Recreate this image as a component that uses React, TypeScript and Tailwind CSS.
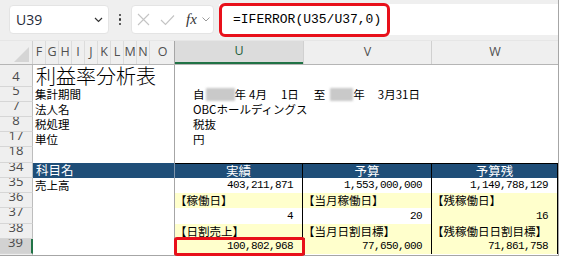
import React from "react";

const jp = "font-['Noto_Sans_CJK_JP',sans-serif]";
const num = "font-['Liberation_Mono',monospace] text-[11px] tracking-[-0.6px] text-black";

const letters: [string, number][] = [
  ["F", 13], ["G", 13], ["H", 13], ["I", 13], ["J", 13],
  ["K", 13], ["L", 13], ["M", 13], ["N", 13], ["O", 25],
];

function RowNum({ n, active, top }: { n: string; active?: boolean; top?: string }) {
  return (
    <div
      className={`w-[33px] shrink-0 overflow-hidden border-b border-[#d6d6d6] flex justify-center text-[13px] leading-[13px] text-[#4a4a4a] font-['Open_Sans',sans-serif] ${
        active ? "bg-[#d2d2d2] border-r-2 border-r-[#217346]" : "bg-[#efefef] border-r border-r-[#bdbdbd]"
      }`}
    >
      <span className={top ?? "-mt-[3px]"}>{n}</span>
    </div>
  );
}

function Blur({ w, className = "" }: { w: number; className?: string }) {
  return (
    <span
      className={`inline-block h-[13px] bg-[#c9c9c9] blur-[1px] rounded-[1px] ${className}`}
      style={{ width: w }}
    />
  );
}

type CellProps = { children?: React.ReactNode; bg?: "y" | "w"; right?: boolean; last?: boolean };

function DataCell({ children, bg = "w", right, last, w }: CellProps & { w: string }) {
  return (
    <div
      className={`${w} shrink-0 flex items-center whitespace-nowrap border-r border-black ${
        bg === "y" ? "bg-[#ffffcc]" : "bg-white"
      } ${right ? "justify-end pr-[9px]" : "pl-[1px]"} ${last ? "" : ""}`}
    >
      {children}
    </div>
  );
}

function Label({ children }: { children: React.ReactNode }) {
  return <span className={`${jp} text-[11.5px] leading-none text-black -ml-[1px]`}>{children}</span>;
}

function Num({ children }: { children: React.ReactNode }) {
  return <span className={`${num} leading-none`}>{children}</span>;
}

function LeftCell({ children, className = "" }: { children?: React.ReactNode; className?: string }) {
  return (
    <div
      className={`w-[142px] shrink-0 flex items-center pl-[3px] border-r border-[#a6a6a6] whitespace-nowrap ${className}`}
    >
      {children}
    </div>
  );
}

export default function App() {
  return (
    <div className="w-[561px] h-[257px] bg-white overflow-hidden">
      <div className="relative w-[559px] h-[256px] border-r border-b border-[#a6a6a6] flex flex-col bg-white">
        {/* formula bar */}
        <div className="h-[40px] shrink-0 bg-[#efefef] flex items-start pt-[4px]">
          <div className="ml-[9px] mt-[1px] w-[100px] h-[29px] rounded-[4px] bg-white border border-[#e4e4e4] flex items-center justify-between pl-[6px] pr-[5px]">
            <span className="font-['Open_Sans',sans-serif] text-[14px] text-[#1f2a3a]">U39</span>
            <svg width="9" height="6" viewBox="0 0 9 6">
              <path d="M1 1 L4.5 4.5 L8 1" fill="none" stroke="#333" strokeWidth="1.2" />
            </svg>
          </div>
          <div className="w-[22px] h-[31px] flex flex-col items-center justify-center gap-[2px]">
            <span className="w-[2.5px] h-[2.5px] rounded-full bg-[#333]" />
            <span className="w-[2.5px] h-[2.5px] rounded-full bg-[#333]" />
            <span className="w-[2.5px] h-[2.5px] rounded-full bg-[#333]" />
          </div>
          <div className="mt-[1px] w-[83px] h-[29px] rounded-[4px] bg-white border border-[#e4e4e4] flex items-center pl-[5px]">
            <svg width="13" height="13" viewBox="0 0 13 13">
              <path d="M1 1 L12 12 M12 1 L1 12" stroke="#c4c4c4" strokeWidth="1.1" />
            </svg>
            <svg width="15" height="12" viewBox="0 0 15 12" className="ml-[10px]">
              <path d="M1 6 L5.5 10.5 L14 1.5" fill="none" stroke="#c4c4c4" strokeWidth="1.1" />
            </svg>
            <span className="ml-[11px] font-['Liberation_Serif',serif] italic text-[15px] leading-none text-[#333]">
              fx
            </span>
            <svg width="8" height="5" viewBox="0 0 8 5" className="ml-[5px]">
              <path d="M0.5 0.5 L4 4 L7.5 0.5" fill="none" stroke="#999" strokeWidth="1" />
            </svg>
          </div>
          <div className="ml-[5px] w-[339px] h-[31px] bg-white flex items-center pl-[14px]">
            <span className="font-['Liberation_Mono',monospace] text-[13px] text-black">=IFERROR(U35/U37,0)</span>
          </div>
        </div>

        {/* column headers */}
        <div className="h-[25px] shrink-0 flex bg-[#efefef] border-t border-[#e6e6e6] border-b border-b-[#b5b5b5] font-['Open_Sans',sans-serif] text-[12.5px] text-[#505050]">
          <div className="w-[33px] shrink-0 flex items-end justify-end pr-[3px] pb-[2px] border-r border-[#d0d0d0]">
            <svg width="15" height="15" viewBox="0 0 15 15">
              <path d="M15 0 L15 15 L0 15 Z" fill="#d5d5d5" />
            </svg>
          </div>
          <div className="w-[142px] shrink-0 flex border-r border-[#a6a6a6]">
            {letters.map(([l, w], i) => (
              <div
                key={l}
                className={`shrink-0 flex items-center justify-center ${i < letters.length - 1 ? "border-r border-[#dcdcdc]" : ""}`}
                style={{ width: w }}
              >
                {l}
              </div>
            ))}
          </div>
          <div className="w-[128px] shrink-0 flex items-center justify-center bg-[#dcdcdc] border-b-2 border-[#217346] text-[#1d5c3a]">
            U
          </div>
          <div className="w-[129px] shrink-0 flex items-center justify-center border-l border-r border-[#d0d0d0]">V</div>
          <div className="w-[126px] shrink-0 flex items-center justify-center">W</div>
        </div>

        {/* row 4 */}
        <div className="h-[22px] shrink-0 flex">
          <RowNum n="4" top="mt-[5px]" />
          <LeftCell>
            <span className={`${jp} font-light text-[20px] leading-none text-black`}>利益率分析表</span>
          </LeftCell>
        </div>

        {/* row 5 */}
        <div className="h-[15px] shrink-0 flex">
          <RowNum n="5" />
          <LeftCell>
            <Label>集計期間</Label>
          </LeftCell>
          <div className={`flex items-center pl-[18px] whitespace-nowrap ${jp} text-[11.5px] leading-none text-black`}>
            <span>自</span>
            <Blur w={29} className="ml-[1px]" />
            <span>年</span>
            <span className="ml-[3px]">4月</span>
            <span className="ml-[14px]">1日</span>
            <span className="ml-[15px]">至</span>
            <Blur w={23} className="ml-[5px]" />
            <span>年</span>
            <span className="ml-[13px]">3月31日</span>
          </div>
        </div>

        {/* row 7 */}
        <div className="h-[15px] shrink-0 flex">
          <RowNum n="7" />
          <LeftCell>
            <Label>法人名</Label>
          </LeftCell>
          <div className={`flex items-center pl-[18px] ${jp} text-[11.5px] leading-none whitespace-nowrap`}>
            OBCホールディングス
          </div>
        </div>

        {/* row 8 */}
        <div className="h-[15px] shrink-0 flex">
          <RowNum n="8" />
          <LeftCell>
            <Label>税処理</Label>
          </LeftCell>
          <div className={`flex items-center pl-[18px] ${jp} text-[11.5px] leading-none`}>税抜</div>
        </div>

        {/* row 17 */}
        <div className="h-[15px] shrink-0 flex">
          <RowNum n="17" />
          <LeftCell>
            <Label>単位</Label>
          </LeftCell>
          <div className={`flex items-center pl-[18px] ${jp} text-[11.5px] leading-none`}>円</div>
        </div>

        {/* row 18 */}
        <div className="h-[16px] shrink-0 flex">
          <RowNum n="18" />
          <LeftCell />
        </div>

        {/* row 34 header band */}
        <div className={`h-[15px] shrink-0 flex ${jp} text-[12.5px] leading-none text-white`}>
          <RowNum n="34" />
          <div className="w-[142px] shrink-0 flex items-center pl-[3px] bg-[#1f4e78] border-r border-[#7f95ab]">科目名</div>
          <div className="w-[128px] shrink-0 flex items-center justify-center bg-[#1f4e78] border-t border-r border-black">実績</div>
          <div className="w-[129px] shrink-0 flex items-center justify-center bg-[#1f4e78] border-t border-r border-black">予算</div>
          <div className="w-[126px] shrink-0 flex items-center justify-center bg-[#1f4e78] border-t border-r border-black">予算残</div>
        </div>

        {/* row 35 */}
        <div className="h-[15px] shrink-0 flex">
          <RowNum n="35" />
          <LeftCell>
            <Label>売上高</Label>
          </LeftCell>
          <DataCell w="w-[128px]" right>
            <Num>403,211,871</Num>
          </DataCell>
          <DataCell w="w-[129px]" right>
            <Num>1,553,000,000</Num>
          </DataCell>
          <DataCell w="w-[126px]" right>
            <Num>1,149,788,129</Num>
          </DataCell>
        </div>

        {/* row 36 */}
        <div className="h-[15px] shrink-0 flex">
          <RowNum n="36" />
          <LeftCell />
          <DataCell w="w-[128px]" bg="y">
            <Label>【稼働日】</Label>
          </DataCell>
          <DataCell w="w-[129px]" bg="y">
            <Label>【当月稼働日】</Label>
          </DataCell>
          <DataCell w="w-[126px]" bg="y">
            <Label>【残稼働日】</Label>
          </DataCell>
        </div>

        {/* row 37 */}
        <div className="h-[16px] shrink-0 flex">
          <RowNum n="37" />
          <LeftCell />
          <DataCell w="w-[128px]" right>
            <Num>4</Num>
          </DataCell>
          <DataCell w="w-[129px]" right>
            <Num>20</Num>
          </DataCell>
          <DataCell w="w-[126px]" bg="y" right>
            <Num>16</Num>
          </DataCell>
        </div>

        {/* row 38 */}
        <div className="h-[15px] shrink-0 flex">
          <RowNum n="38" />
          <LeftCell />
          <DataCell w="w-[128px]" bg="y">
            <Label>【日割売上】</Label>
          </DataCell>
          <DataCell w="w-[129px]" bg="y">
            <Label>【当月日割目標】</Label>
          </DataCell>
          <DataCell w="w-[126px]" bg="y">
            <Label>【残稼働日日割目標】</Label>
          </DataCell>
        </div>

        {/* row 39 */}
        <div className="h-[15px] shrink-0 flex">
          <RowNum n="39" active />
          <LeftCell />
          <DataCell w="w-[128px]" bg="y" right>
            <Num>100,802,968</Num>
          </DataCell>
          <DataCell w="w-[129px]" bg="y" right>
            <Num>77,650,000</Num>
          </DataCell>
          <DataCell w="w-[126px]" bg="y" right>
            <Num>71,861,758</Num>
          </DataCell>
        </div>

        {/* row 40 sliver */}
        <div className="flex-1 flex">
          <div className="w-[33px] shrink-0 bg-[#efefef] border-r border-[#bdbdbd]" />
          <LeftCell />
        </div>

        {/* selection edge of U39 */}
        <div className="absolute left-[302px] top-[238px] w-[3px] h-[17px] bg-[#217346]" />

        {/* annotation boxes */}
        <div className="absolute left-[219px] top-[3px] w-[171px] h-[34px] border-[3px] border-[#e8101a] rounded-[6px]" />
        <div className="absolute left-[174px] top-[237px] w-[131px] h-[19px] border-[3px] border-[#e8101a] rounded-[3px]" />
      </div>
    </div>
  );
}
